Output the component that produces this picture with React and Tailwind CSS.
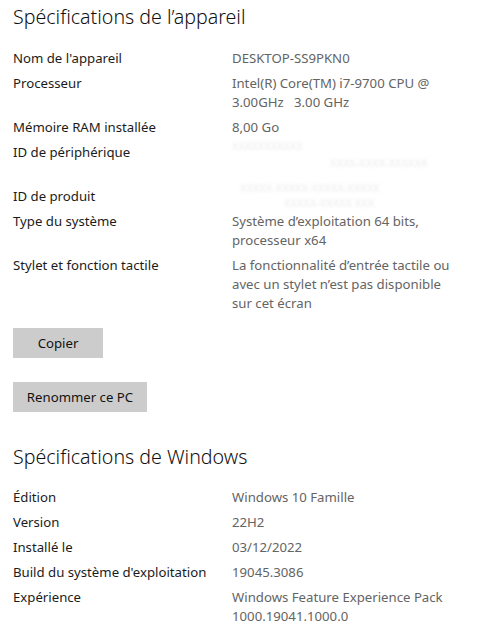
import React from 'react'

const device = [
  { label: "Nom de l'appareil", value: ['DESKTOP-SS9PKN0'] },
  { label: 'Processeur', value: ['Intel(R) Core(TM) i7-9700 CPU @', '3.00GHz   3.00 GHz'] },
  { label: 'Mémoire RAM installée', value: ['8,00 Go'] },
  { label: 'ID de périphérique', blur: ['XXXXXXXXXXX', 'XXXX-XXXX-XXXXXX'], offsets: ['pl-0', 'pl-[98px]'], box: 'h-[44px] -mt-[6px] leading-[17px]' },
  { label: 'ID de produit', blur: ['XXXXX-XXXXX-XXXXX-XXXXX', 'XXXXX-XXXXX  XXX'], offsets: ['pl-[8px]', 'pl-[52px]'], box: 'h-[26px] -mt-[7px] leading-[15px]' },
  { label: 'Type du système', value: ["Système d’exploitation 64 bits,", 'processeur x64'] },
  { label: 'Stylet et fonction tactile', value: ['La fonctionnalité d’entrée tactile ou', 'avec un stylet n’est pas disponible', 'sur cet écran'] },
]

const windows = [
  { label: 'Édition', value: ['Windows 10 Famille'] },
  { label: 'Version', value: ['22H2'] },
  { label: 'Installé le', value: ['03/12/2022'] },
  { label: "Build du système d'exploitation", value: ['19045.3086'] },
  { label: 'Expérience', value: ['Windows Feature Experience Pack', '1000.19041.1000.0'] },
]

const Row = ({ row }) => (
  <div className="flex">
    <div className="w-[219px] shrink-0 text-[#1b1b1b]">{row.label}</div>
    {row.blur ? (
      <div className={`${row.box} text-[11px] text-[#ebebeb] blur-[1.4px] select-none whitespace-nowrap`}>
        {row.blur.map((l, i) => (
          <div key={i} className={row.offsets[i]}>{l}</div>
        ))}
      </div>
    ) : (
      <div className="text-[#646464]">
        {row.value.map((l, i) => (
          <div key={i} className="whitespace-pre">{l}</div>
        ))}
      </div>
    )}
  </div>
)

export default function App() {
  return (
    <div className="min-h-screen bg-white px-[13px] pt-[3px] text-[13.2px] leading-[19px]" style={{ fontFamily: '"Noto Sans", "Open Sans", sans-serif' }}>
      <h1 className="text-[19.6px] leading-[28px] font-light text-[#111]">Spécifications de l’appareil</h1>

      <div className="mt-[18px] flex flex-col gap-[6px]">
        {device.map((r) => <Row key={r.label} row={r} />)}
      </div>

      <button className="mt-[15px] block w-[90px] h-[30px] bg-[#cccccc] text-[#111]">Copier</button>
      <button className="mt-[24px] block w-[134px] h-[30px] bg-[#cccccc] text-[#111]">Renommer ce PC</button>

      <h2 className="mt-[31px] text-[19.6px] leading-[28px] font-light text-[#111]">Spécifications de Windows</h2>

      <div className="mt-[17px] flex flex-col gap-[6px]">
        {windows.map((r) => <Row key={r.label} row={r} />)}
      </div>
    </div>
  )
}
